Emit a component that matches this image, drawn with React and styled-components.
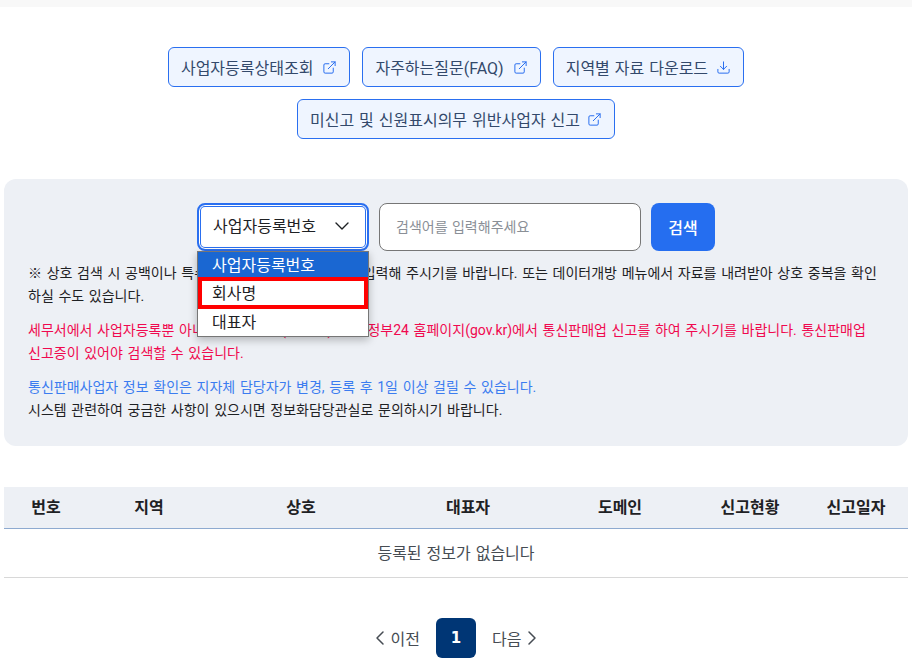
import styled, { createGlobalStyle } from "styled-components";
import { ChevronDown, ChevronLeft, ChevronRight, Download, ExternalLink } from "lucide-react";

const GlobalStyle = createGlobalStyle`
  * { box-sizing: border-box; }
  body {
    margin: 0;
    background: #fff;
    color: #1e2124;
    font-family: Roboto, "Noto Sans CJK KR", "Noto Sans", sans-serif;
    overflow: hidden;
  }
`;

const Page = styled.div`
  width: 912px;
  height: 661px;
  overflow: hidden;
`;
const TopBar = styled.div`
  height: 7px;
  background: #f8f8f8;
`;
const LinkArea = styled.div`
  display: flex;
  flex-wrap: wrap;
  justify-content: center;
  gap: 12px;
  width: 640px;
  margin: 40px auto 40px;
`;
const LinkButton = styled.a`
  display: flex;
  align-items: center;
  gap: ${(props) => props.$gap}px;
  height: 40px;
  padding: 0 12px;
  background: #eff5ff;
  border: 1px solid #2a6ff0;
  border-radius: 6px;
  color: #33496b;
  font-size: 16px;
  word-spacing: 1px;
  white-space: nowrap;
  svg {
    color: #2a6ff0;
  }
`;
const SearchPanel = styled.section`
  margin: 0 4px;
  height: 267px;
  padding: 24px 28px 0 24px;
  background: #edf0f5;
  border-radius: 12px;
`;
const SearchRow = styled.div`
  display: flex;
  justify-content: center;
  gap: 10px;
  width: 856px;
  margin-bottom: 11px;
`;
const SelectWrap = styled.div`
  position: relative;
  width: 172px;
  height: 48px;
`;
const SelectBox = styled.div`
  display: flex;
  align-items: center;
  justify-content: space-between;
  height: 100%;
  padding: 0 13px 5px 14px;
  background: #fff;
  border: 2px solid #2a6ff0;
  border-radius: 8px;
  box-shadow: inset 0 0 0 1px #fff, inset 0 0 0 2px #2a6ff0;
  font-size: 16px;
  color: #1e2124;
  svg {
    margin-top: 3px;
  }
`;
const OptionList = styled.ul`
  position: absolute;
  top: 48px;
  left: 0;
  width: 172px;
  margin: 0;
  padding: 0;
  list-style: none;
  background: #fff;
  border: 1px solid #767676;
  box-shadow: 0 3px 8px rgba(0, 0, 0, 0.25);
  font-size: 16px;
  z-index: 5;
`;
const Option = styled.li`
  height: ${(props) => props.$h}px;
  line-height: ${(props) => props.$lh}px;
  padding-left: ${(props) => (props.$marked ? "10px" : "14px")};
  background: ${(props) => (props.$selected ? "#1a67d2" : "#fff")};
  color: ${(props) => (props.$selected ? "#fff" : "#1e2124")};
  border: ${(props) => (props.$marked ? "4px solid #f00" : "none")};
`;
const SearchInput = styled.input`
  width: 262px;
  height: 48px;
  padding: 0 16px;
  background: #fff;
  border: 1px solid #767676;
  border-radius: 8px;
  font-family: inherit;
  font-size: 14px;
  word-spacing: 1px;
  &::placeholder {
    color: #8a8f96;
  }
`;
const SearchButton = styled.button`
  width: 64px;
  height: 48px;
  background: #256ef0;
  border: 0;
  border-radius: 8px;
  color: #fff;
  font-family: inherit;
  font-size: 16px;
  font-weight: 500;
`;
const Note = styled.p`
  margin: 0 0 ${(props) => props.$gap || 0}px;
  font-size: 14px;
  line-height: 23px;
  word-spacing: 1.2px;
  color: ${(props) => props.$color || "#1e2124"};
`;
const ResultTable = styled.table`
  width: 904px;
  margin: 41px 4px 0;
  border-collapse: collapse;
  table-layout: fixed;
`;
const HeadCell = styled.th`
  width: ${(props) => props.$w}px;
  height: 41px;
  padding: 0 0 2px;
  background: #edf0f5;
  border-bottom: 1px solid #8eaad0;
  font-size: 16px;
  font-weight: 700;
  color: #1e2124;
`;
const EmptyCell = styled.td`
  height: 49px;
  padding: 0 0 2px;
  text-align: center;
  border-bottom: 1px solid #d8d8d8;
  font-size: 16px;
  word-spacing: 1px;
  color: #464c53;
`;
const Pager = styled.nav`
  display: flex;
  justify-content: center;
  align-items: center;
  gap: 16px;
  margin-top: 40px;
`;
const PageMove = styled.a`
  display: flex;
  align-items: center;
  font-size: 16px;
  color: #464c53;
  svg {
    margin: 0 -1px;
  }
`;
const PageNumber = styled.a`
  display: flex;
  align-items: center;
  justify-content: center;
  width: 40px;
  height: 40px;
  background: #003675;
  border-radius: 6px;
  color: #fff;
  font-family: "DejaVu Sans", sans-serif;
  font-size: 15px;
  font-weight: 700;
`;

const links = [
  { label: "사업자등록상태조회", icon: "out", gap: 9 },
  { label: "자주하는질문(FAQ)", icon: "out", gap: 9 },
  { label: "지역별 자료 다운로드", icon: "down", gap: 8 },
  { label: "미신고 및 신원표시의무 위반사업자 신고", icon: "out", gap: 7 },
];

const columns = [
  ["번호", 84],
  ["지역", 122],
  ["상호", 182],
  ["대표자", 152],
  ["도메인", 152],
  ["신고현황", 108],
  ["신고일자", 104],
];

export default function App() {
  return (
    <Page>
      <GlobalStyle />
      <TopBar />
      <LinkArea>
        {links.map((item) => (
          <LinkButton key={item.label} $gap={item.gap}>
            {item.label}
            {item.icon === "out" ? (
              <ExternalLink size={15} strokeWidth={1.6} />
            ) : (
              <Download size={15} strokeWidth={1.6} />
            )}
          </LinkButton>
        ))}
      </LinkArea>
      <SearchPanel>
        <SearchRow>
          <SelectWrap>
            <SelectBox>
              사업자등록번호
              <ChevronDown size={24} strokeWidth={1.4} />
            </SelectBox>
            <OptionList>
              <Option $selected $h={25} $lh={28}>사업자등록번호</Option>
              <Option $marked $h={32} $lh={25}>회사명</Option>
              <Option $h={27} $lh={27}>대표자</Option>
            </OptionList>
          </SelectWrap>
          <SearchInput placeholder="검색어를 입력해주세요" />
          <SearchButton>검색</SearchButton>
        </SearchRow>
        <Note $gap={11}>
          ※ 상호 검색 시 공백이나 특수문자까지 포함한 상호명을 입력해 주시기를 바랍니다. 또는 데이터개방 메뉴에서 자료를 내려받아 상호 중복을 확인하실 수도 있습니다.
        </Note>
        <Note $color="#f0094f" $gap={11}>
          세무서에서 사업자등록뿐 아니라 시·군·구청(민원24) 또는 정부24 홈페이지(gov.kr)에서 통신판매업 신고를 하여 주시기를 바랍니다. 통신판매업 신고증이 있어야 검색할 수 있습니다.
        </Note>
        <Note $color="#3b7cf0">통신판매사업자 정보 확인은 지자체 담당자가 변경, 등록 후 1일 이상 걸릴 수 있습니다.</Note>
        <Note>시스템 관련하여 궁금한 사항이 있으시면 정보화담당관실로 문의하시기 바랍니다.</Note>
      </SearchPanel>
      <ResultTable>
        <thead>
          <tr>
            {columns.map(([name, w]) => (
              <HeadCell key={name} $w={w}>
                {name}
              </HeadCell>
            ))}
          </tr>
        </thead>
        <tbody>
          <tr>
            <EmptyCell colSpan={7}>등록된 정보가 없습니다</EmptyCell>
          </tr>
        </tbody>
      </ResultTable>
      <Pager>
        <PageMove>
          <ChevronLeft size={24} strokeWidth={1.5} />
          이전
        </PageMove>
        <PageNumber>1</PageNumber>
        <PageMove>
          다음
          <ChevronRight size={24} strokeWidth={1.5} />
        </PageMove>
      </Pager>
    </Page>
  );
}
